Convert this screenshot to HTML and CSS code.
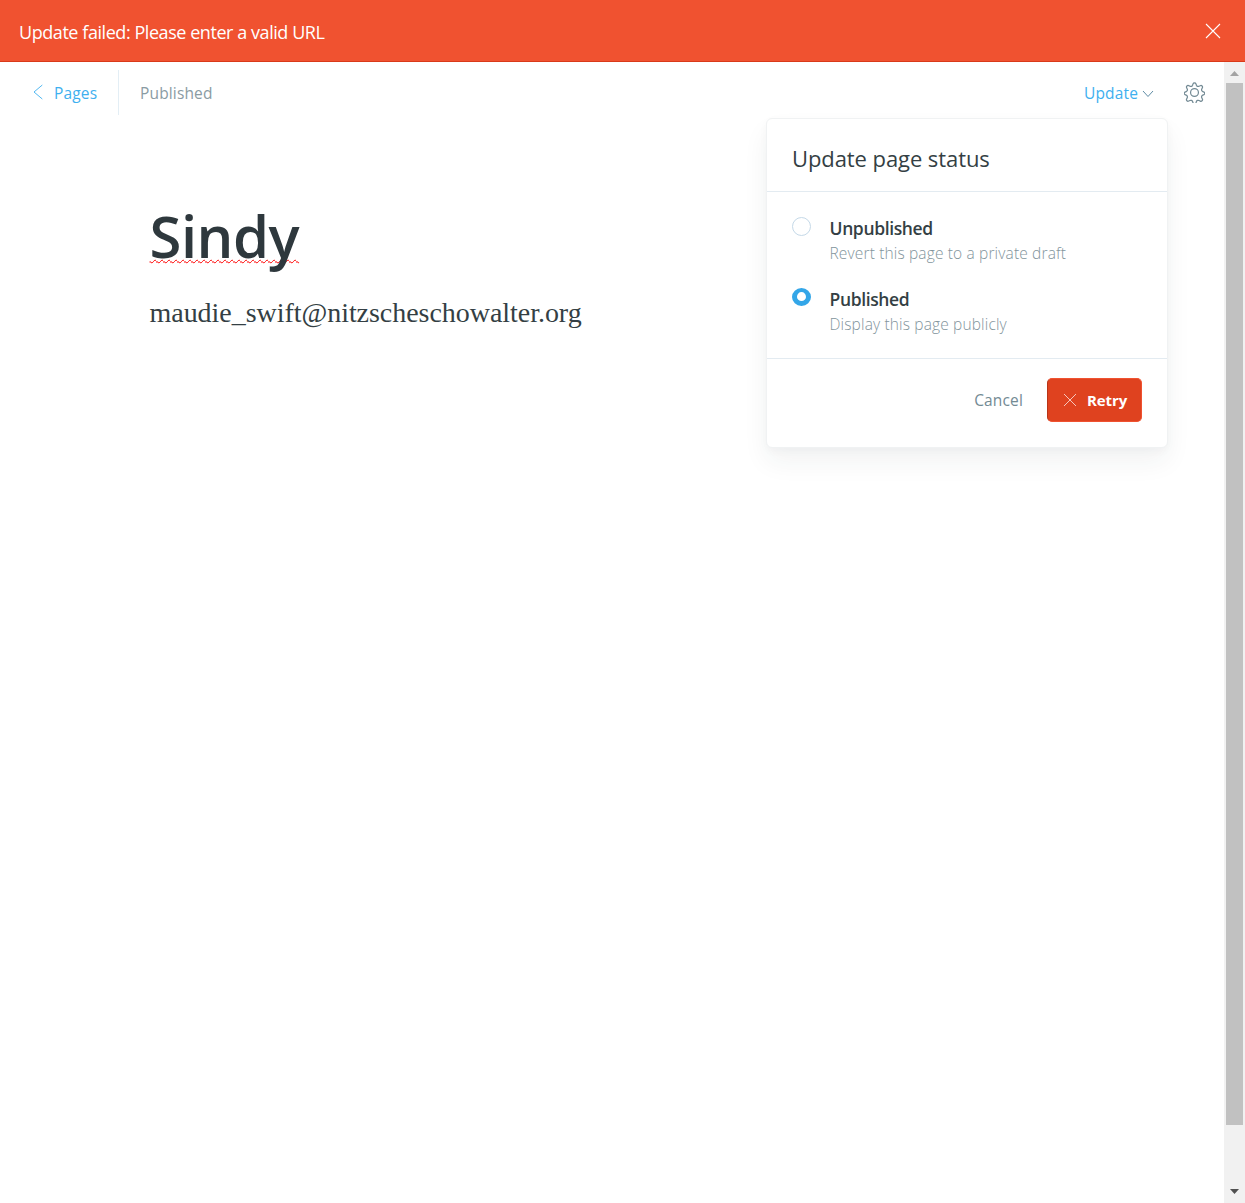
FILE: index.html
```html
<!DOCTYPE html>
<html lang="en">
<head>
<meta charset="utf-8">
<title>Edit page</title>
<link rel="stylesheet" href="styles.css">
</head>
<body>
<div class="alert" role="alert">
  <span class="alert-text">Update failed: Please enter a valid URL</span>
  <svg class="alert-close" viewBox="0 0 16 16"><path d="M1 1l14 14M15 1L1 15"/></svg>
</div>
<div class="workspace">
  <main class="editor">
    <header class="toolbar">
      <a class="back"><svg class="back-icon" viewBox="0 0 10 16"><path d="M9.300 1L1 8l8.300 7"/></svg><span class="nav-text">Pages</span></a>
      <span class="state nav-text">Published</span>
      <div class="update">
        <a class="update-trigger"><span class="nav-text">Update</span><svg class="chevron" viewBox="0 0 12 8"><path d="M1 1l5 5.500 5-5.500"/></svg></a>
        <section class="dropdown">
          <h2 class="dropdown-title">Update page status</h2>
          <div class="options">
            <div class="option">
              <span class="radio"></span>
              <div class="option-text"><div class="option-label">Unpublished</div><div class="option-note">Revert this page to a private draft</div></div>
            </div>
            <div class="option">
              <span class="radio radio-on"></span>
              <div class="option-text"><div class="option-label">Published</div><div class="option-note">Display this page publicly</div></div>
            </div>
          </div>
          <footer class="actions">
            <span class="cancel">Cancel</span>
            <button class="retry"><svg class="retry-icon" viewBox="0 0 14 14"><path d="M1 1l12 12M13 1L1 13"/></svg>Retry</button>
          </footer>
        </section>
      </div>
      <svg class="gear" viewBox="0 0 24 24"><circle cx="12" cy="12" r="4.500"/><path d="M13.700 2.200l.5 1.500a2.200 2.200 0 0 0 3 1.200l1.400-.7a1.800 1.800 0 0 1 2.400 2.400l-.7 1.400a2.200 2.200 0 0 0 1.200 3l1.300.5a1.700 1.700 0 0 1 0 3l-1.300.5a2.200 2.200 0 0 0-1.200 3l.7 1.400a1.800 1.800 0 0 1-2.400 2.400l-1.400-.7a2.200 2.200 0 0 0-3 1.200l-.5 1.500a1.800 1.800 0 0 1-3.400 0l-.5-1.500a2.200 2.200 0 0 0-3-1.200l-1.400.7a1.800 1.800 0 0 1-2.400-2.400l.7-1.400a2.200 2.200 0 0 0-1.200-3l-1.300-.5a1.700 1.700 0 0 1 0-3l1.300-.5a2.200 2.200 0 0 0 1.200-3l-.7-1.400a1.800 1.800 0 0 1 2.400-2.400l1.400.7a2.200 2.200 0 0 0 3-1.200l.5-1.500a1.800 1.800 0 0 1 3.400 0z"/></svg>
    </header>
    <article class="document">
      <h1 class="title"><span class="misspelled">Sindy</span></h1>
      <p class="body-text">maudie_swift@nitzscheschowalter.org</p>
    </article>
  </main>
  <div class="scrollbar">
    <svg class="arrow arrow-up" viewBox="0 0 9 5"><path d="M0 5L4.500 0 9 5z"/></svg>
    <div class="thumb"></div>
    <svg class="arrow" viewBox="0 0 9 5"><path d="M0 0l4.500 5L9 0z"/></svg>
  </div>
</div>
</body>
</html>
```
FILE: styles.css
```css
* { box-sizing: border-box; }
body {
  margin: 0;
  height: 1203px;
  display: flex;
  flex-direction: column;
  overflow: hidden;
  background: #fff;
  color: #343f44;
  font-family: "Open Sans", "Noto Sans", sans-serif;
  font-size: 16px;
}
svg { display: block; flex: none; fill: none; stroke: currentColor; }
.alert {
  flex: none;
  height: 62px;
  padding: 0 24px 0 19px;
  display: flex;
  align-items: center;
  justify-content: space-between;
  background: #f05230;
  border-bottom: 1px solid #d93a1a;
  color: #fff;
  font-size: 18px;
  letter-spacing: -.44px;
}
.alert-text { padding-top: 2px; }
.alert-close { width: 16px; height: 16px; stroke-width: 1.1; }
.workspace { flex: 1; display: flex; min-height: 0; }
.editor { flex: 1; }
.toolbar {
  height: 60px;
  padding: 0 19px 0 33px;
  display: flex;
  align-items: center;
  font-size: 15.500px;
  letter-spacing: .15px;
}
.nav-text { padding-top: 2px; }
.back {
  height: 45px;
  width: 86px;
  display: flex;
  align-items: center;
  gap: 11px;
  border-right: 1px solid #e3eef5;
  color: #3eb0ef;
}
.back-icon { width: 10px; height: 16px; stroke-width: .9; }
.state { margin-left: 21px; color: #8a9ba3; }
.update { position: relative; height: 24px; margin-left: auto; margin-right: 30px; color: #3eb0ef; }
.update-trigger { height: 24px; display: flex; align-items: center; gap: 4px; }
.chevron { width: 12px; height: 8px; margin-top: 3px; color: #5f8ca5; }
.gear { width: 21px; height: 21px; color: #738a94; stroke-width: 1.4; }
.dropdown {
  position: absolute;
  right: -14px;
  top: 38px;
  width: 402px;
  height: 330px;
  border: 1px solid #f0f2f3;
  border-radius: 6px;
  background: #fff;
  box-shadow: 0 14px 26px rgba(39, 44, 49, .06), 0 3px 8px rgba(39, 44, 49, .03);
  color: #343f44;
  letter-spacing: normal;
}
.dropdown-title {
  margin: 0;
  height: 73px;
  padding: 5px 25px 0;
  display: flex;
  align-items: center;
  font-size: 22px;
  font-weight: 400;
  letter-spacing: -.08px;
  border-bottom: 1px solid #e3ebf1;
}
.options { height: 167px; padding: 25px; border-bottom: 1px solid #e3ebf1; }
.option { display: flex; gap: 18.500px; height: 71px; }
.radio { width: 19px; height: 19px; border: 1px solid #c5d9e8; border-radius: 50%; }
.radio-on { height: 18px; border: 5px solid #33a6e8; border-top-width: 4.500px; }
.option-text { margin-top: -1px; }
.option-label { font-size: 17.500px; font-weight: 600; line-height: 25px; letter-spacing: -.37px; }
.option-note { font-size: 15.500px; font-weight: 300; line-height: 24px; letter-spacing: .15px; color: #82949c; }
.actions { display: flex; align-items: center; justify-content: flex-end; gap: 24px; padding: 19px 25px 0; }
.cancel { color: #738a94; font-size: 15.500px; letter-spacing: .15px; }
.retry {
  width: 95px;
  height: 44px;
  padding: 0 15px;
  display: flex;
  align-items: center;
  gap: 10px;
  border: 1px solid #f05230;
  border-left-color: #b83417;
  border-radius: 5px;
  background: #df421f;
  color: #fff;
  font: 700 15px "Open Sans", sans-serif;
  letter-spacing: -.1px;
}
.retry-icon { width: 14px; height: 14px; opacity: .7; }
.document { padding: 76px 150px 0 149.500px; }
.title { margin: 0; font-size: 58px; line-height: 76px; font-weight: 600; letter-spacing: -.5px; color: #2e383d; }
.misspelled {
  text-decoration: underline wavy #f00;
  text-decoration-thickness: 1px;
  text-decoration-skip-ink: none;
  text-underline-offset: 1px;
}
.body-text { margin: 20px 0 0; font: 28px/38px "Liberation Serif", serif; letter-spacing: -.04px; color: #343f44; }
.scrollbar { width: 21px; background: #f1f1f1; display: flex; flex-direction: column; align-items: center; padding: 9px 0 9px; }
.thumb { width: 17px; height: 1042px; margin: 7px 0 auto; background: #c1c1c1; }
.arrow { width: 9px; height: 5px; fill: #505050; stroke: none; }
.arrow-up { fill: #a3a3a3; }
```
